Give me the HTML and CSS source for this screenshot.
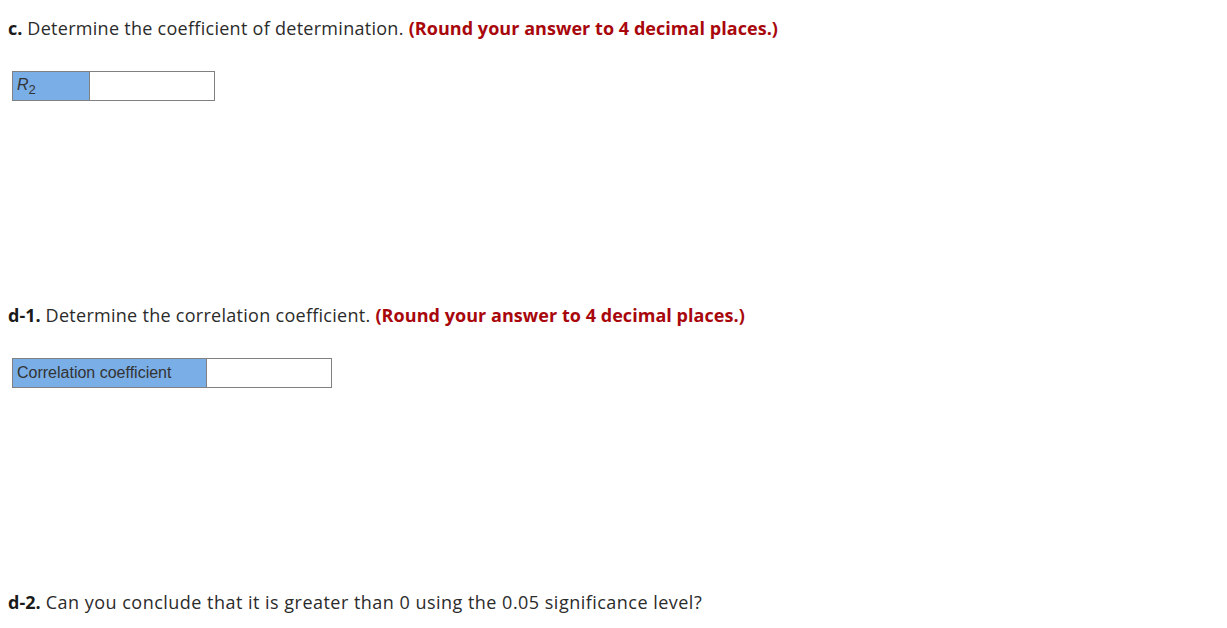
FILE: index.html
```html
<!DOCTYPE html>
<html>
<head>
<meta charset="utf-8">
<link rel="stylesheet" href="styles.css">
</head>
<body>
<div class="page">
  <section class="part part-c">
    <p class="q"><b>c.</b> Determine the coefficient of determination. <span class="hint">(Round your answer to 4 decimal places.)</span></p>
    <table class="ans ans-r2">
      <tr><td class="lbl"><i>R</i><sub>2</sub></td><td class="inp"></td></tr>
    </table>
  </section>
  <section class="part part-d1">
    <p class="q"><b>d-1.</b> Determine the correlation coefficient. <span class="hint">(Round your answer to 4 decimal places.)</span></p>
    <table class="ans ans-cc">
      <tr><td class="lbl">Correlation coefficient</td><td class="inp"></td></tr>
    </table>
  </section>
  <section class="part part-d2">
    <p class="q q-wide"><b>d-2.</b> Can you conclude that it is greater than 0 using the 0.05 significance level?</p>
  </section>
</div>
</body>
</html>
```

FILE: styles.css
```css
html, body { margin: 0; padding: 0; background: #fff; }
.page { padding: 17px 8px 0 8px; font-family: "Open Sans", Lato, sans-serif; color: #2b2b2b; font-variant-ligatures: none; }
.q { margin: 0; font-size: 18px; line-height: 22px; letter-spacing: 0.28px; }
.q-wide { letter-spacing: 0.48px; }
.q b { font-weight: 700; color: #1a1a1a; letter-spacing: 0; }
.hint { color: #a8070c; font-weight: 700; letter-spacing: 0.05px; }
.ans { border-collapse: collapse; margin: 0 0 0 4px; font-family: "Liberation Sans", Arial, sans-serif; font-size: 16px; color: #333; }
.ans td { border: 1px solid #808080; height: 28px; padding: 0 4px; }
.lbl { background: #7aaee6; }
.ans-r2 { margin-top: 32px; }
.ans-r2 .lbl { width: 68px; }
.ans-r2 .inp { width: 116px; }
.ans-cc { margin-top: 32px; }
.ans-cc .lbl { width: 185px; }
.ans-cc .inp { width: 116px; }
.part-d1 { margin-top: 203px; }
.part-d2 { margin-top: 203px; }
sub { font-size: 13px; vertical-align: -4px; }
```
